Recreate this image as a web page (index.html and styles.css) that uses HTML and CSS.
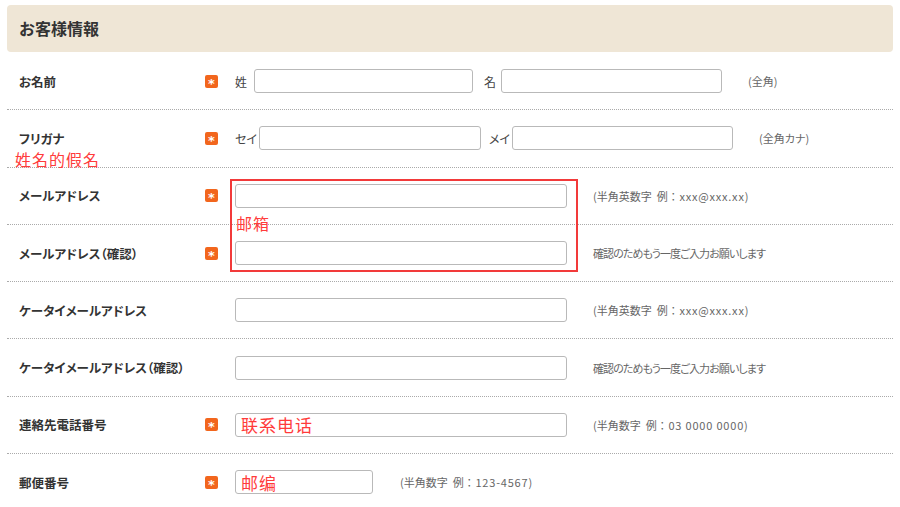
FILE: index.html
```html
<!DOCTYPE html>
<html lang="ja">
<head>
  <meta charset="UTF-8">
  <title>お客様情報</title>
  <link rel="stylesheet" href="styles.css">
</head>
<body>
  <div class="container">
    <div class="header">お客様情報</div>

    <div class="row">
      <div class="label">お名前</div>
      <span class="req">*</span>
      <span class="pre pre-sei">姓</span>
      <input type="text" class="inp w-sei">
      <span class="pre pre-mei">名</span>
      <input type="text" class="inp w-mei">
      <span class="note">(全角)</span>
    </div>

    <div class="row">
      <div class="label">フリガナ</div>
      <span class="req">*</span>
      <span class="pre pre-kana">セイ</span>
      <input type="text" class="inp w-kana">
      <span class="pre pre-kana pre-kana2">メイ</span>
      <input type="text" class="inp w-kana2">
      <span class="note">(全角カナ)</span>
    </div>

    <div class="row">
      <div class="label">メールアドレス</div>
      <span class="req">*</span>
      <input type="text" class="inp w-long">
      <span class="note">(半角英数字&nbsp;&nbsp;例<span class="ex">：xxx@xxx.xx</span>)</span>
    </div>

    <div class="row">
      <div class="label">メールアドレス（確認）</div>
      <span class="req">*</span>
      <input type="text" class="inp w-long">
      <span class="note note-tight">確認のためもう一度ご入力お願いします</span>
    </div>

    <div class="row">
      <div class="label">ケータイメールアドレス</div>
      <span class="req req-off"></span>
      <input type="text" class="inp w-long">
      <span class="note">(半角英数字&nbsp;&nbsp;例<span class="ex">：xxx@xxx.xx</span>)</span>
    </div>

    <div class="row">
      <div class="label">ケータイメールアドレス（確認）</div>
      <span class="req req-off"></span>
      <input type="text" class="inp w-long">
      <span class="note note-tight">確認のためもう一度ご入力お願いします</span>
    </div>

    <div class="row">
      <div class="label">連絡先電話番号</div>
      <span class="req">*</span>
      <input type="text" class="inp w-long inp-memo" value="联系电话">
      <span class="note">(半角数字&nbsp;&nbsp;例<span class="ex">：03 0000 0000</span>)</span>
    </div>

    <div class="row row-last">
      <div class="label">郵便番号</div>
      <span class="req">*</span>
      <input type="text" class="inp w-zip inp-memo" value="邮编">
      <span class="note note-zip">(半角数字&nbsp;&nbsp;例<span class="ex">：123-4567</span>)</span>
    </div>

    <!-- notes written over the screenshot -->
    <div class="memo memo-kana">姓名的假名</div>
    <div class="memo-box"></div>
    <div class="memo memo-mail">邮箱</div>
  </div>
</body>
</html>
```

FILE: styles.css
```css
body {
  margin: 0;
  background: #fff;
  color: #333;
  font-family: "Noto Sans CJK JP", "Noto Sans", sans-serif;
}

.container {
  position: relative;
  padding: 5px 7px 0 7px;
}

.header {
  background-color: #efe6d6;
  border-radius: 4px;
  height: 47px;
  line-height: 47px;
  padding-left: 12px;
  font-size: 16px;
  font-weight: bold;
  color: #333;
  margin-bottom: 1px;
}

.row {
  display: flex;
  align-items: center;
  height: 56.3px;
  border-bottom: 1px dotted #aaa;
  padding-left: 12px;
  font-size: 12px;
}

.row-last {
  border-bottom: none;
}

.label {
  width: 186px;
  font-size: 12.5px;
  font-weight: bold;
  color: #333;
  font-feature-settings: "palt";
}

.req {
  width: 13px;
  height: 13px;
  margin-right: 17px;
  background-color: #f2661d;
  border-radius: 2px;
  color: #fff;
  font-size: 13px;
  font-weight: bold;
  line-height: 17px;
  text-align: center;
  font-family: "DejaVu Sans", sans-serif;
}

.req-off {
  background: none;
}

.pre {
  font-size: 12px;
  color: #444;
  font-feature-settings: "palt";
}

.pre-sei { margin-right: 7px; }
.pre-mei { margin-left: 11px; margin-right: 5px; }
.pre-kana { margin-right: 2px; }
.pre-kana2 { margin-left: 8px; }

.inp {
  box-sizing: border-box;
  height: 24px;
  border: 1px solid #b9b9b9;
  border-radius: 3px;
  padding: 0 5px;
  background: #fff;
  font-family: inherit;
  font-size: 12px;
}

.w-sei { width: 219px; }
.w-mei { width: 221px; }
.w-kana { width: 222px; }
.w-kana2 { width: 221px; }
.w-long { width: 332px; }
.w-zip { width: 138px; }

.inp-memo {
  color: #ff3b3b;
  font-family: "Noto Sans CJK SC", sans-serif;
  font-size: 17px;
  letter-spacing: 1px;
}

.note {
  margin-left: 26px;
  font-size: 11px;
  color: #666;
  font-feature-settings: "palt";
}

.note .ex {
  font-feature-settings: normal;
  letter-spacing: 0.8px;
}

.note-tight {
  letter-spacing: -0.9px;
}

.note-zip { margin-left: 27px; }

.memo {
  position: absolute;
  color: #ff3b3b;
  font-family: "Noto Sans CJK SC", sans-serif;
  font-size: 16px;
  letter-spacing: 1px;
  line-height: 18px;
}

.memo-kana {
  left: 15px;
  top: 150px;
}

.memo-mail {
  left: 236px;
  top: 214px;
}

.memo-box {
  position: absolute;
  left: 230px;
  top: 179px;
  width: 344px;
  height: 89px;
  border: 2px solid #f23a3a;
}
```
